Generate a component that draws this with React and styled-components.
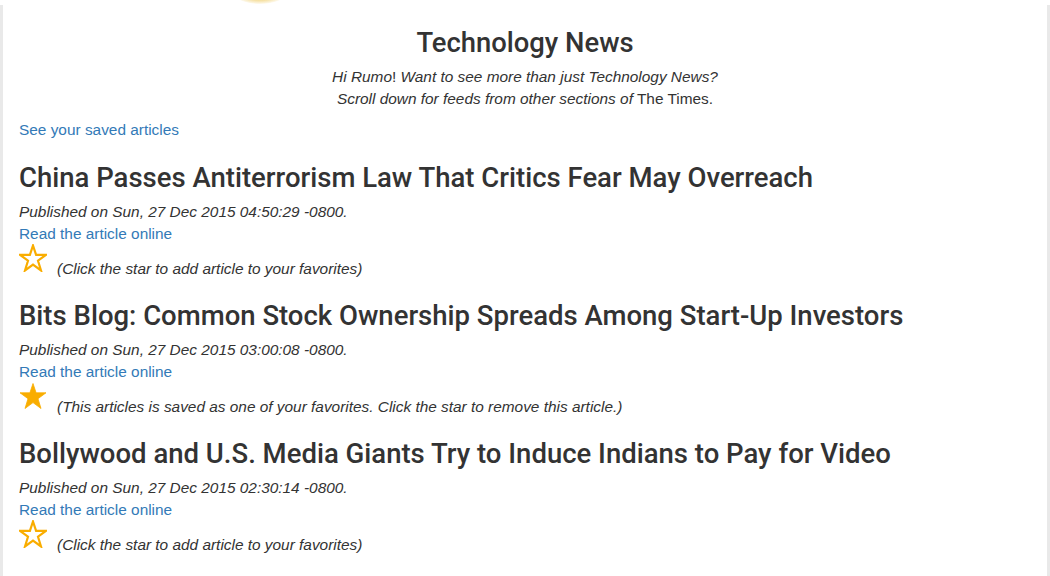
import React from "react";
import styled, { createGlobalStyle } from "styled-components";

const GlobalStyle = createGlobalStyle`
  html, body {
    margin: 0;
    padding: 0;
    background: #fff;
  }
  body {
    font-family: "Liberation Sans", Arial, sans-serif;
    font-size: 15.4px;
    line-height: 22px;
    color: #333;
  }
`;

const articles = [
  {
    id: 1,
    title: "China Passes Antiterrorism Law That Critics Fear May Overreach",
    date: "Sun, 27 Dec 2015 04:50:29 -0800",
    saved: false,
  },
  {
    id: 2,
    title: "Bits Blog: Common Stock Ownership Spreads Among Start-Up Investors",
    date: "Sun, 27 Dec 2015 03:00:08 -0800",
    saved: true,
  },
  {
    id: 3,
    title: "Bollywood and U.S. Media Giants Try to Induce Indians to Pay for Video",
    date: "Sun, 27 Dec 2015 02:30:14 -0800",
    saved: false,
  },
];

const Star = ({ filled }) => (
  <StarIcon viewBox="0 0 28 28" aria-hidden="true">
    <polygon
      points="14,1.5 17.1,10.8 27,10.8 19,16.7 22,26.5 14,20.6 6,26.5 9,16.7 1,10.8 10.9,10.8"
      fill={filled ? "#f9ad00" : "none"}
      stroke="#f9ad00"
      strokeWidth={filled ? 0.8 : 2.2}
      strokeLinejoin="miter"
    />
  </StarIcon>
);

const Article = ({ a }) => (
  <ArticleBlock>
    <ArticleTitle>{a.title}</ArticleTitle>
    <Published>Published on {a.date}.</Published>
    <Link href="#">Read the article online</Link>
    <FavRow>
      <Star filled={a.saved} />
      <FavNote>
        {a.saved
          ? "(This articles is saved as one of your favorites. Click the star to remove this article.)"
          : "(Click the star to add article to your favorites)"}
      </FavNote>
    </FavRow>
  </ArticleBlock>
);

export default function App() {
  return (
    <>
      <GlobalStyle />
      <Glow />
      <Page>
        <Header>
          <Heading>Technology News</Heading>
          <Intro>
            <em>Hi Rumo</em>! <em>Want to see more than just Technology News?</em>
            <br />
            <em>Scroll down for feeds from other sections of</em> The Times.
          </Intro>
        </Header>
        <SavedLink href="#">See your saved articles</SavedLink>
        {articles.map((a) => (
          <Article key={a.id} a={a} />
        ))}
      </Page>
    </>
  );
}

const Glow = styled.div`
  position: absolute;
  top: -14px;
  left: 236px;
  width: 48px;
  height: 18px;
  border-radius: 50%;
  background: radial-gradient(ellipse at center, #f1cf6e 0%, #f6e2a8 45%, rgba(255, 255, 255, 0) 75%);
`;

const Page = styled.div`
  margin-top: 5px;
  width: 1050px;
  min-height: 571px;
  border-left: 3px solid #e9e9e9;
  border-right: 3px solid #e9e9e9;
  padding: 0 16px;
  box-sizing: border-box;
`;

const Header = styled.div`
  text-align: center;
  padding-top: 23px;
`;

const Heading = styled.h3`
  margin: 0 0 8px;
  font-family: Roboto, "Liberation Sans", sans-serif;
  font-size: 27.4px;
  font-weight: 500;
  line-height: 1.1;
  color: #333;
`;

const Intro = styled.p`
  margin: 0 0 9px;
  line-height: 22px;
`;

const Link = styled.a`
  display: block;
  width: fit-content;
  color: #337ab7;
  text-decoration: none;
`;

const SavedLink = styled(Link)`
  margin-bottom: 22px;
`;

const ArticleBlock = styled.div`
  margin-bottom: 28.5px;
`;

const ArticleTitle = styled.h2`
  margin: 0 0 8px;
  font-family: Roboto, "Liberation Sans", sans-serif;
  font-size: 27.5px;
  font-weight: 500;
  line-height: 1.1;
  color: #333;
`;

const Published = styled.p`
  margin: 0;
  font-style: italic;
`;

const FavRow = styled.div`
  display: flex;
  align-items: flex-end;
  gap: 10px;
  margin-top: -1px;
`;

const StarIcon = styled.svg`
  width: 28px;
  height: 28px;
  flex: none;
`;

const FavNote = styled.span`
  font-style: italic;
  line-height: 20px;
  margin-bottom: -7px;
`;
